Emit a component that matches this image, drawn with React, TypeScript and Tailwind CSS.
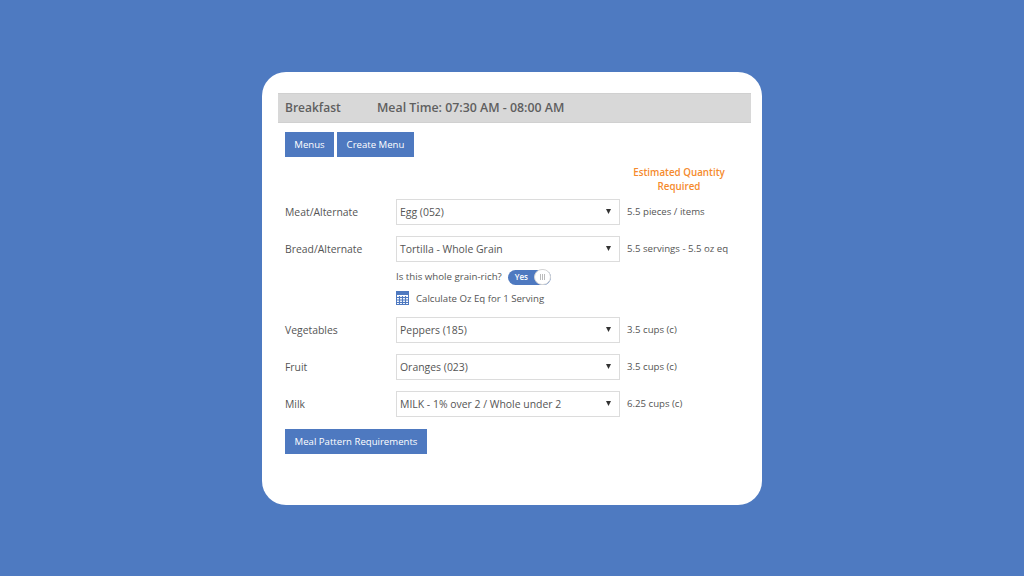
import React from "react";

function Row({ label, value, qty, className = "" }: { label: string; value: string; qty: React.ReactNode; className?: string }) {
  return (
    <div className={`flex items-center h-[26px] ${className}`}>
      <div className="w-[111px] pt-px text-[10.4px] text-[#555]">{label}</div>
      <div className="relative w-[224px] h-[26px] border border-[#dcdcdc] bg-white flex items-center pl-[3px] pt-px text-[10.45px] text-[#555] shrink-0">
        {value}
        <svg className="absolute right-[8px] top-[9px]" width="5" height="5" viewBox="0 0 5 5"><path d="M0 0H5L2.5 5Z" fill="#333" /></svg>
      </div>
      <div className="ml-[7px] text-[9.65px] text-[#555] whitespace-nowrap">{qty}</div>
    </div>
  );
}

function Btn({ children, className = "" }: { children: React.ReactNode; className?: string }) {
  return (
    <div className={`h-[25px] pt-px bg-[#4e79c0] text-white text-[9.6px] flex items-center justify-center ${className}`}>{children}</div>
  );
}

export default function App() {
  return (
    <div className="w-[1024px] h-[576px] bg-[#4e7ac1] flex justify-center pt-[72px] font-['Open_Sans',sans-serif] overflow-hidden">
      <div className="w-[500px] h-[433px] bg-white rounded-[24px] pt-[21px] pl-[16px] pr-[11px]">
        <div className="h-[30px] bg-[#d8d8d8] border-y border-[#d0d0d0] flex items-center pl-[7px] font-semibold text-[#5f5f5f]">
          <span className="w-[92px] text-[12px]">Breakfast</span>
          <span className="text-[12.35px]">Meal Time: 07:30 AM - 08:00 AM</span>
        </div>
        <div className="pl-[7px]">
          <div className="flex gap-[3px] mt-[9px]">
            <Btn className="w-[49px]">Menus</Btn>
            <Btn className="w-[77px]">Create Menu</Btn>
          </div>
          <div className="h-[27px] mt-[9px] ml-[334px] w-[120px] text-center text-[9.8px] leading-[14px] font-semibold text-[#f58a2c]">
            Estimated Quantity<br />Required
          </div>
          <Row className="mt-[6px]" label="Meat/Alternate" value="Egg (052)" qty="5.5 pieces / items" />
          <Row className="mt-[11px]" label="Bread/Alternate" value="Tortilla - Whole Grain" qty="5.5 servings - 5.5 oz eq" />
          <div className="ml-[111px] mt-[7px] h-[16px] flex items-center text-[9.7px] text-[#555]">
            <span>Is this whole grain-rich?</span>
            <div className="relative ml-[6px] w-[43px] h-[15px] rounded-full bg-[#4e79c0] text-white text-[8px] font-semibold flex items-center pl-[7px]">
              Yes
              <div className="absolute right-0 top-[-0.5px] w-[17px] h-[16px] rounded-full bg-white border border-[#d5d5d5] flex items-center justify-center gap-[1px]">
                <span className="w-px h-[6px] bg-[#bbb]" />
                <span className="w-px h-[6px] bg-[#bbb]" />
                <span className="w-px h-[6px] bg-[#bbb]" />
              </div>
            </div>
          </div>
          <div className="ml-[111px] mt-[5px] h-[16px] flex items-center text-[9.65px] text-[#555]">
            <svg width="13" height="14" viewBox="0 0 13 14" className="mr-[7px]">
              <rect x="0.5" y="0.5" width="12" height="13" fill="#fff" stroke="#4e79c0" />
              <rect x="1" y="1" width="11" height="3" fill="#4e79c0" />
              <path d="M1 6.5H12M1 9H12M1 11.5H12M3.5 5V13M6.5 5V13M9.5 5V13" stroke="#4e79c0" strokeWidth="1.2" />
            </svg>
            <span className="pt-[2px]">Calculate Oz Eq for 1 Serving</span>
          </div>
          <Row className="mt-[11px]" label="Vegetables" value="Peppers (185)" qty="3.5 cups (c)" />
          <Row className="mt-[11px]" label="Fruit" value="Oranges (023)" qty="3.5 cups (c)" />
          <Row className="mt-[11px]" label="Milk" value="MILK - 1% over 2 / Whole under 2" qty="6.25 cups (c)" />
          <Btn className="w-[142px] mt-[12px]">Meal Pattern Requirements</Btn>
        </div>
      </div>
    </div>
  );
}
